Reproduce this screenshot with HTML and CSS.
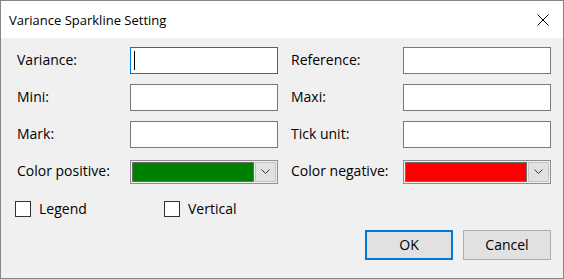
FILE: index.html
```html
<!DOCTYPE html>
<html>
<head>
<meta charset="utf-8">
<link rel="stylesheet" href="styles.css">
</head>
<body>
<div class="dialog">
  <div class="titlebar">
    <span class="title">Variance Sparkline Setting</span>
    <span class="close">
      <svg width="12" height="12" viewBox="0 0 12 12"><path d="M0.5 0.5 L11.5 11.5 M11.5 0.5 L0.5 11.5" stroke="#000" stroke-width="1" fill="none"/></svg>
    </span>
  </div>
  <div class="content">
    <div class="form">
      <div class="label">Variance:</div>
      <div class="input focus"><span class="caret"></span></div>
      <div class="label">Reference:</div>
      <div class="input"></div>

      <div class="label">Mini:</div>
      <div class="input"></div>
      <div class="label">Maxi:</div>
      <div class="input"></div>

      <div class="label">Mark:</div>
      <div class="input"></div>
      <div class="label">Tick unit:</div>
      <div class="input"></div>

      <div class="label">Color positive:</div>
      <div class="combo"><span class="swatch green"></span><span class="drop"><svg width="9" height="5" viewBox="0 0 9 5"><path d="M0.5 0.5 L4.5 4.5 L8.5 0.5" stroke="#333" stroke-width="1" fill="none"/></svg></span></div>
      <div class="label">Color negative:</div>
      <div class="combo"><span class="swatch red"></span><span class="drop"><svg width="9" height="5" viewBox="0 0 9 5"><path d="M0.5 0.5 L4.5 4.5 L8.5 0.5" stroke="#333" stroke-width="1" fill="none"/></svg></span></div>
    </div>
    <div class="checks">
      <label class="check first"><span class="box"></span><span class="ctext">Legend</span></label>
      <label class="check"><span class="box"></span><span class="ctext">Vertical</span></label>
    </div>
    <div class="buttons">
      <div class="btn default">OK</div>
      <div class="btn">Cancel</div>
    </div>
  </div>
</div>
</body>
</html>
```

FILE: styles.css
```css
html, body {
  margin: 0;
  padding: 0;
}
body {
  width: 564px;
  height: 279px;
  overflow: hidden;
  font-family: "Open Sans", "Noto Sans", sans-serif;
  font-size: 14px;
  color: #000;
}
.dialog {
  box-sizing: border-box;
  width: 564px;
  height: 279px;
  border: 1px solid #858585;
  background: #f0f0f0;
  display: flex;
  flex-direction: column;
}
.titlebar {
  height: 37px;
  background: #fff;
  display: flex;
  align-items: center;
  justify-content: space-between;
  padding: 0 14px 0 8px;
}
.title {
  font-size: 13px;
  line-height: 20px;
  margin-top: 0;
}
.close {
  display: flex;
  width: 12px;
  height: 12px;
}
.content {
  flex: 1;
  display: flex;
  flex-direction: column;
  padding: 9px 12px 0 16px;
}
.form {
  display: grid;
  grid-template-columns: 113px 148px 112px 148px;
  column-gap: 0;
  row-gap: 10px;
  grid-auto-rows: 27px;
}
.form .label:nth-child(4n+3) {
  margin-left: 13px;
}
.label {
  display: flex;
  align-items: center;
  line-height: 20px;
  margin-top: -1px;
}
.input {
  box-sizing: border-box;
  height: 27px;
  background: #fff;
  border: 1px solid #7a7a7a;
  position: relative;
}
.input.focus {
  border-color: #0078d7;
}
.caret {
  position: absolute;
  left: 3px;
  top: 3px;
  width: 1px;
  height: 19px;
  background: #000;
}
.form .input:nth-child(4n) {
  margin-left: 13px;
  margin-right: -13px;
}
.combo {
  box-sizing: border-box;
  height: 24px;
  align-self: center;
  border: 1px solid #8f8f8f;
  background: #f0f0f0;
  padding: 1px;
  display: flex;
}
.form .combo:nth-child(4n) {
  margin-left: 13px;
  margin-right: -13px;
}
.swatch {
  flex: 1;
  border: 1px solid #6d6d6d;
  margin-right: 1px;
}
.green { background: #008000; }
.red { background: #ff0000; }
.drop {
  width: 21px;
  background: #e1e1e1;
  border: 1px solid #c4c4c4;
  box-sizing: border-box;
  display: flex;
  align-items: center;
  justify-content: center;
}
.checks {
  display: flex;
  margin-top: 16px;
  margin-left: -2px;
  height: 16px;
  align-items: center;
}
.check {
  display: flex;
  align-items: center;
  width: 149px;
}
.box {
  box-sizing: border-box;
  width: 16px;
  height: 16px;
  border: 1px solid #333;
  background: #fff;
  margin-right: 8px;
}
.ctext {
  line-height: 20px;
  margin-top: -1px;
}
.buttons {
  display: flex;
  justify-content: flex-end;
  gap: 10px;
  margin-top: 13px;
  padding-right: 0;
}
.btn {
  box-sizing: border-box;
  width: 88px;
  height: 30px;
  background: #e1e1e1;
  border: 1px solid #adadad;
  display: flex;
  align-items: center;
  justify-content: center;
  line-height: 20px;
}
.btn.default {
  border: 2px solid #0078d7;
}
```
